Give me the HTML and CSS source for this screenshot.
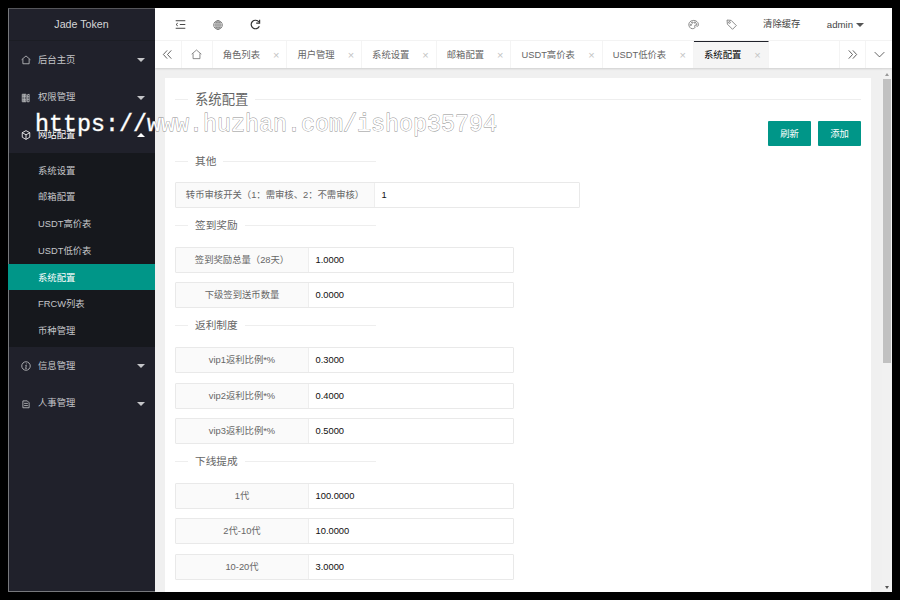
FILE: index.html
```html
<!DOCTYPE html>
<html lang="zh-CN">
<head>
<meta charset="utf-8">
<title>Jade Token</title>
<link rel="stylesheet" href="styles.css">
</head>
<body>
<div class="app">
  <aside class="sidebar">
    <div class="brand">Jade Token</div>
    <nav>
      <div class="item"><svg class="ico" viewBox="0 0 16 16"><path d="M1 7.5 8 1.5l7 6M3 6.5V14h10V6.5"/></svg><span>后台主页</span><i class="caret"></i></div>
      <div class="item"><svg class="ico" viewBox="0 0 16 16"><path d="M2 2h3v12H2zM5 2h3v12H5zM10 3l3-1v12h-3zM2 5h6M2 11h6M10 6h3M10 10h3"/></svg><span>权限管理</span><i class="caret"></i></div>
      <div class="item open"><svg class="ico" viewBox="0 0 16 16"><path d="m8 1 6 3.2v7.4L8 15l-6-3.4V4.2zM2 4.2l6 3.5 6-3.5M8 7.7V15"/></svg><span>网站配置</span><i class="caret up"></i></div>
      <div class="submenu">
        <div class="sub">系统设置</div>
        <div class="sub">邮箱配置</div>
        <div class="sub">USDT高价表</div>
        <div class="sub">USDT低价表</div>
        <div class="sub active">系统配置</div>
        <div class="sub">FRCW列表</div>
        <div class="sub">币种管理</div>
      </div>
      <div class="item"><svg class="ico" viewBox="0 0 16 16"><circle cx="8" cy="8" r="6.8"/><path d="M7 7h1.5L7.5 12H9M8.7 4v1.2"/></svg><span>信息管理</span><i class="caret"></i></div>
      <div class="item"><svg class="ico" viewBox="0 0 16 16"><path d="M3 3h7l3 3v8H3zM5 7h6M5 10.5h6"/></svg><span>人事管理</span><i class="caret"></i></div>
    </nav>
  </aside>
  <div class="main">
    <header class="topbar">
      <div class="tools">
        <svg class="tool dark" viewBox="0 0 16 16"><path d="M1 2.5h14M7 8h8M1 13.5h14M4 6 1.5 8 4 10"/></svg>
        <svg class="tool small" viewBox="0 0 16 16"><circle cx="8" cy="8" r="7"/><ellipse cx="8" cy="8" rx="3.3" ry="7"/><path d="M8 1v14M1 8h14M2 4.5h12M2 11.5h12"/></svg>
        <svg class="tool dark bold" viewBox="0 0 16 16"><path d="M13.6 10.5A6.2 6.2 0 1 1 13 4.4M14 1v5H9"/></svg>
      </div>
      <div class="account">
        <svg class="tool" viewBox="0 0 16 16"><path d="M4 13.5C-.5 10 .5 3.500 6.500 2.200c5-.9 9.500 2.800 8.500 7.200-.5 2-2.500 1-3.500 0-1.500-1-2.500.5-1.500 2 1.200 2.200-3.500 3.500-6 2.100z"/><circle cx="4.200" cy="8.500" r="1"/><circle cx="6.200" cy="5.200" r="1"/><circle cx="10" cy="5.200" r="1"/><circle cx="12.500" cy="7.500" r=".7"/></svg>
        <svg class="tool" viewBox="0 0 16 16"><path d="M1.500 1.500 7.500 2l7.500 7.500-5.500 5.500L2 7.500z"/><circle cx="5" cy="5" r="1.300"/></svg>
        <span class="clear">清除缓存</span>
        <span class="user">admin</span><i class="caret grey"></i>
      </div>
    </header>
    <div class="tabs">
      <div class="nav"><svg class="tool dark" viewBox="0 0 16 16"><path d="M7.500 2 2 8l5.500 6M13.500 2 8 8l5.500 6"/></svg></div>
      <div class="home"><svg class="tool" viewBox="0 0 16 16"><path d="M1 7.500 8 1.500l7 6M3 6.500V14h10V6.500"/></svg></div>
      <div class="tab"><span>角色列表</span><b>×</b></div>
      <div class="tab"><span>用户管理</span><b>×</b></div>
      <div class="tab"><span>系统设置</span><b>×</b></div>
      <div class="tab"><span>邮箱配置</span><b>×</b></div>
      <div class="tab wide"><span>USDT高价表</span><b>×</b></div>
      <div class="tab wide"><span>USDT低价表</span><b>×</b></div>
      <div class="tab current"><span>系统配置</span><b>×</b></div>
      <div class="nav right"><svg class="tool dark" viewBox="0 0 16 16"><path d="m2.500 2 5.500 6-5.500 6M8.500 2l5.500 6-5.500 6"/></svg></div>
      <div class="nav last"><svg class="tool dark" viewBox="0 0 16 16"><path d="m1 4.500 7 7 7-7"/></svg></div>
    </div>
    <div class="content">
      <section class="card">
        <div class="legend title"><span>系统配置</span></div>
        <div class="actions"><button>刷新</button><button>添加</button></div>
        <div class="legend first"><span>其他</span></div>
        <div class="field long"><label>转币审核开关（1：需审核、2：不需审核）</label><div class="value">1</div></div>
        <div class="legend"><span>签到奖励</span></div>
        <div class="field"><label>签到奖励总量（28天）</label><div class="value">1.0000</div></div>
        <div class="field"><label>下级签到送币数量</label><div class="value">0.0000</div></div>
        <div class="legend"><span>返利制度</span></div>
        <div class="field"><label>vip1返利比例*%</label><div class="value">0.3000</div></div>
        <div class="field"><label>vip2返利比例*%</label><div class="value">0.4000</div></div>
        <div class="field"><label>vip3返利比例*%</label><div class="value">0.5000</div></div>
        <div class="legend"><span>下线提成</span></div>
        <div class="field"><label>1代</label><div class="value">100.0000</div></div>
        <div class="field"><label>2代-10代</label><div class="value">10.0000</div></div>
        <div class="field"><label>10-20代</label><div class="value">3.0000</div></div>
      </section>
      <div class="scrollbar"><i class="arrow-up"></i><div class="thumb"></div><i class="arrow-down"></i></div>
    </div>
  </div>
  <div class="watermark">https://www.huzhan.com/ishop35794</div>
</div>
</body>
</html>
```
FILE: styles.css
```css
* { box-sizing: border-box; }
body {
  margin: 0;
  padding: 8px;
  height: 600px;
  overflow: hidden;
  background: #000;
  font: 9.33px/1.4 "Liberation Sans", "Noto Sans CJK SC", sans-serif;
  color: #666;
}
.app { position: relative; display: flex; width: 884px; height: 584px; overflow: hidden; background: #fff; }
svg { fill: none; stroke: currentColor; stroke-width: 1.3; flex: none; }

.sidebar { width: 147px; flex: none; background: #20212b; color: #c4c5c8; border-left: 1px solid #77787c; border-top: 1px solid #55565b; border-bottom: 1px solid #77787c; }
.brand { height: 32.300px; line-height: 31px; text-align: center; font-size: 10.670px; color: #d5d6d8; border-bottom: 1px solid #1b1d24; padding-right: 1px; }
.item { display: flex; align-items: center; height: 37.400px; padding: 1px 10px 0 12px; }
.item .ico { width: 10px; height: 10px; margin-right: 7px; }
.item.open { color: #fff; }
.caret { margin-left: auto; border: 4px solid transparent; border-top-color: currentColor; border-bottom: 0; }
.caret.up { border-top: 0; border-bottom: 4px solid currentColor; }
.submenu { padding: 3.300px 0; background: #16181d; }
.sub { height: 26.730px; line-height: 28.200px; padding-left: 29px; }
.sub.active { background: #009688; color: #fff; margin-left: -1px; padding-left: 30px; }

.main { flex: 1; min-width: 0; display: flex; flex-direction: column; }
.topbar { height: 33.300px; padding-top: 1.500px; display: flex; justify-content: space-between; align-items: center; border-bottom: 1px solid #f5f5f5; color: #444; }
.tool { width: 11px; height: 11px; color: #666; }
.tool.dark { color: #333; }
.tool.bold { stroke-width: 1.7; }
.tool.small { width: 10px; height: 10px; stroke-width: 1.100; }
.tools { display: flex; align-items: center; gap: 27px; padding-left: 19.500px; }
.account { display: flex; align-items: center; padding-right: 28.500px; }
.account .tool { margin-right: 27px; stroke-width: 1.100; }
.clear { margin-left: -1px; }
.user { margin: 0 2.500px 0 26.500px; font-size: 9.600px; }
.grey { color: #555; }

.tabs { display: flex; height: 27px; flex: none; position: relative; box-shadow: 0 1px 2px rgba(0,0,0,.14); }
.nav, .home { display: flex; align-items: center; justify-content: center; width: 26.500px; border-right: 1px solid #f4f4f4; }
.home { width: 31.200px; }
.home .tool, .nav .tool { stroke-width: 1.1; }
.tab { display: flex; align-items: center; justify-content: space-between; width: 74.700px; padding: 1.500px 7px 0 10px; border-right: 1px solid #f4f4f4; white-space: nowrap; }
.tab.wide { width: 91.300px; }
.tab b { color: #c4c4c4; font-weight: 400; font-size: 11px; line-height: 1; }
.tab.current { background: #f5f5f5; color: #000; border-top: 1.500px solid #20222a; padding-top: 0; }
.nav.right { margin-left: auto; border-left: 1px solid #f4f4f4; width: 27px; }
.nav.last { border-right: 0; width: 26px; }

.content { flex: 1; min-height: 0; display: flex; justify-content: space-between; background: #f0f0f0; padding: 10px 0 0 10px; }
.card { width: 706px; background: #fff; padding: 12.700px 10px 0; }
.legend { display: flex; align-items: center; width: 201px; height: 17.500px; margin: -.7px 0 12.400px; font-size: 10.670px; }
.legend::before { content: ""; width: 13px; height: 1px; background: #eee; margin-right: 7px; }
.legend::after { content: ""; flex: 1; height: 1px; background: #eee; margin-left: 7px; }
.legend.title { width: 686px; height: 18px; font-size: 13.330px; margin: 0 0 12.300px; }
.legend.first { margin-top: 5px; }
.actions { display: flex; justify-content: flex-end; gap: 7px; height: 26px; }
button { width: 43px; height: 25px; padding: 1px 0 0; border: 0; border-radius: 1px; background: #009688; color: #fff; font: inherit; }
.field { display: flex; width: 339px; height: 26px; margin-bottom: 9.500px; border: 1px solid #e9e9e9; border-radius: 1px; line-height: 24.500px; }
.field label { width: 133px; flex: none; text-align: center; background: #fafafa; border-right: 1px solid #eee; white-space: nowrap; }
.field.long { width: 405px; }
.field.long label { width: 199px; }
.value { padding-left: 6.500px; color: #111; }

.scrollbar { width: 10px; margin-top: -10px; display: flex; flex-direction: column; align-items: center; background: #f1f1f1; }
.arrow-up { border: 2.500px solid transparent; border-top: 0; border-bottom: 3px solid #999; margin: 5px 0 3px; }
.thumb { width: 8px; height: 284px; background: #c1c1c1; }
.arrow-down { margin: auto 0 3px; border: 2.500px solid transparent; border-bottom: 0; border-top: 3px solid #555; }

.watermark {
  position: absolute;
  left: 27px;
  top: 102px;
  font: 23.330px/30px "Liberation Mono", monospace;
  color: #fff;
  -webkit-text-stroke: .8px #8c8c8c;
  paint-order: stroke fill;
  white-space: nowrap;
}
```
